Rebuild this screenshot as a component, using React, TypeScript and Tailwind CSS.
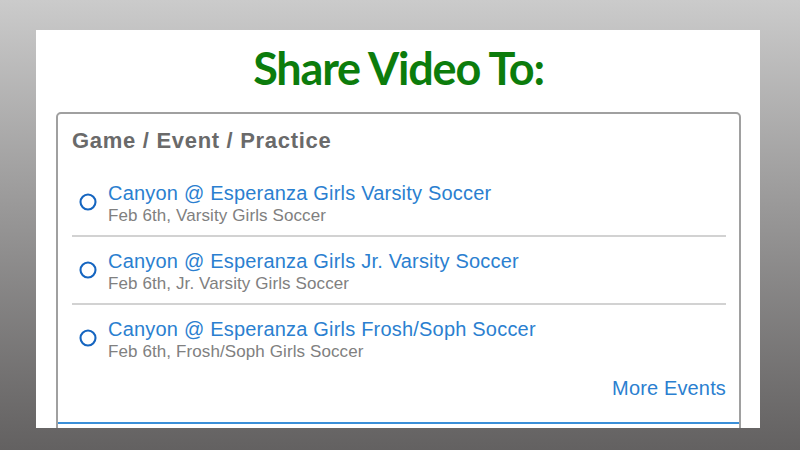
import { Circle } from 'lucide-react';

type EventItem = {
  title: string;
  detail: string;
};

const events: EventItem[] = [
  { title: 'Canyon @ Esperanza Girls Varsity Soccer', detail: 'Feb 6th, Varsity Girls Soccer' },
  { title: 'Canyon @ Esperanza Girls Jr. Varsity Soccer', detail: 'Feb 6th, Jr. Varsity Girls Soccer' },
  { title: 'Canyon @ Esperanza Girls Frosh/Soph Soccer', detail: 'Feb 6th, Frosh/Soph Girls Soccer' },
];

function EventRow({ title, detail, last }: EventItem & { last: boolean }) {
  return (
    <label
      className={`flex items-start h-[68px] pt-[12px] cursor-pointer ${last ? '' : 'border-b-2 border-[#d2d2d2]'}`}
    >
      <div className="w-[36px] pt-[12px] pl-[7px]">
        <Circle size={18} strokeWidth={2.8} className="text-[#1565c0]" />
      </div>
      <div className="flex flex-col">
        <span className="text-[20px] leading-[24px] tracking-[0.2px] text-[#2b7fd0]">{title}</span>
        <span className="text-[17px] leading-[22px] tracking-[0.1px] text-[#808080]">{detail}</span>
      </div>
    </label>
  );
}

export default function App() {
  return (
    <div className="w-[800px] h-[450px] overflow-hidden bg-linear-to-b from-[#cbcbcb] to-[#636161] pt-[30px] pl-[36px] pr-[40px] font-['Liberation_Sans',Arial,sans-serif]">
      <div className="bg-white h-[398px] pl-[20px] pr-[19px] pt-[12px] overflow-hidden">
        <h1 className="text-center text-[45px] leading-[52px] font-bold text-[#0c7c0c] font-['Lato',sans-serif] tracking-[-1.2px]">
          Share Video To:
        </h1>
        <div className="mt-[18px] border-2 border-[#a0a0a0] rounded-[5px] h-[340px] pl-[14px] pr-[13px] pt-[13px] flex flex-col">
          <h2 className="text-[22px] leading-[28px] font-bold tracking-[0.7px] text-[#6a6a6a]">
            Game / Event / Practice
          </h2>
          <div className="mt-[14px] flex flex-col">
            {events.map((e, i) => (
              <EventRow key={e.title} {...e} last={i === events.length - 1} />
            ))}
          </div>
          <div className="flex justify-end mt-[3px]">
            <a className="text-[20px] leading-[24px] tracking-[0.15px] text-[#2b7fd0] cursor-pointer">More Events</a>
          </div>
          <div className="mt-[22px] -ml-[14px] -mr-[13px] border-t-2 border-[#3b8fd8]" />
        </div>
      </div>
    </div>
  );
}
